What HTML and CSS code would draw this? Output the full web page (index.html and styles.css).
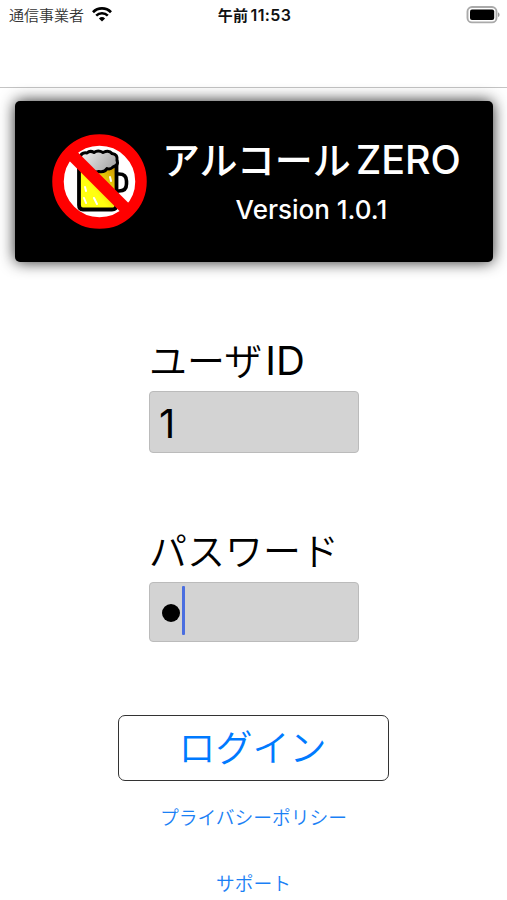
FILE: index.html
```html
<!DOCTYPE html>
<html lang="ja">
<head>
    <meta charset="UTF-8">
    <meta name="viewport" content="width=device-width, initial-scale=1.0">
    <title>アルコールZERO</title>
    <link rel="stylesheet" href="styles.css">
</head>
<body>
    <!-- Status bar -->
    <div class="status-bar">
        <div class="carrier">
            <span>通信事業者</span>
            <svg class="wifi" width="20" height="15" viewBox="0 0 20 15">
                <path d="M1 5.2 A12.6 12.6 0 0 1 19 5.2" fill="none" stroke="#000" stroke-width="2.7"/>
                <path d="M4.2 8.7 A8 8 0 0 1 15.8 8.7" fill="none" stroke="#000" stroke-width="2.5"/>
                <path d="M10 14.6 L6.9 11.5 A4.6 4.6 0 0 1 13.1 11.5 Z"/>
            </svg>
        </div>
        <div class="clock">午前<span>11:53</span></div>
        <svg class="battery" width="34" height="18" viewBox="0 0 34 18">
            <rect x="1.5" y="1" width="29" height="15.4" rx="4.5" fill="#fff" stroke="#aaa" stroke-width="1.9"/>
            <rect x="4" y="3.5" width="24.2" height="10.4" rx="2"/>
            <path d="M32 6.3 Q33.6 7 33.6 8.7 Q33.6 10.4 32 11.1 Z" fill="#999"/>
        </svg>
    </div>

    <div class="nav-bar"></div>

    <!-- Banner -->
    <div class="banner">
        <svg class="logo" width="96" height="96" viewBox="0 0 96 96">
            <defs>
                <linearGradient id="beer" x1="0" y1="1" x2="1" y2="0">
                    <stop offset="0.4" stop-color="#ffff10"/>
                    <stop offset="1" stop-color="#c98a00"/>
                </linearGradient>
                <linearGradient id="foam" x1="0" y1="0" x2="1" y2="0.4">
                    <stop offset="0" stop-color="#f4f4f4"/>
                    <stop offset="1" stop-color="#aaa"/>
                </linearGradient>
            </defs>
            <circle cx="48.5" cy="48.5" r="41" fill="#fff"/>
            <path d="M65 41 H68 Q75.5 41 75.5 48 V51 Q75.5 58 68 58 H65" fill="#fff" stroke="#000" stroke-width="3.6"/>
            <path d="M28 29 V72 Q28 76.5 32 76.5 H61 Q65.5 76.5 65.5 72 V29 Z" fill="url(#beer)" stroke="#000" stroke-width="3.8"/>
            <path d="M34 54 L35 58 M33 65 L35 70 M43 65 L46 71 M59 44 L60 48" stroke="#fff" stroke-width="2" stroke-linecap="round"/>
            <path d="M29 25 Q30 19 36 20 Q39 17 43 19.5 Q47 16.5 52 19.5 Q58 16.5 61 20.5 Q67 21.5 66 27.5 Q68 32 62 34 Q59 37 56 35.5 Q54 39.5 48 38.5 Q43 40 40 36 Q35 36 34 32 Q26 31 29 25 Z" fill="url(#foam)" stroke="#000" stroke-width="3" stroke-linejoin="round"/>
            <path d="M21 22 L74 75" stroke="#f00" stroke-width="12"/>
            <circle cx="48.5" cy="48.5" r="41.5" fill="none" stroke="#f00" stroke-width="11.5"/>
        </svg>
        <div class="banner-text">
            <h1>アルコール<span>ZERO</span></h1>
            <p>Version 1.0.1</p>
        </div>
    </div>

    <!-- Login form -->
    <form class="login">
        <label for="user-id">ユーザ<span>ID</span></label>
        <input type="text" id="user-id" class="field" value="1">

        <div class="label-password">パスワード</div>
        <div class="field field-password">
            <span class="dot"></span>
            <span class="caret"></span>
        </div>

        <button type="button" class="login-button">ログイン</button>
    </form>

    <div class="links">
        <a href="#">プライバシーポリシー</a>
        <a href="#">サポート</a>
    </div>
</body>
</html>
```
FILE: styles.css
```css
* {
    box-sizing: border-box;
}

body {
    margin: 0;
    height: 900px;
    overflow: hidden;
    font-family: Inter, 'Noto Sans CJK JP', sans-serif;
    background-color: white;
    color: black;
}

/* Status bar */
.status-bar {
    display: grid;
    grid-template-columns: 1fr auto 1fr;
    align-items: center;
    height: 30px;
    padding: 0 7px 0 9px;
    font-size: 15px;
    line-height: 30px;
}

.carrier {
    display: flex;
    align-items: center;
    gap: 8px;
    font-weight: 350;
    color: #333;
}

.wifi {
    margin-top: -2px;
}

.clock {
    font-weight: 600;
    letter-spacing: 0.4px;
    color: #111;
}

.clock span {
    margin-left: 2px;
    font-size: 16px;
}

.battery {
    justify-self: end;
    margin-top: -1px;
}

.nav-bar {
    height: 58px;
    border-bottom: 1px solid #c4c4c4;
}

/* Banner */
.banner {
    display: flex;
    height: 161px;
    margin: 13px 14px 0 15px;
    padding-left: 36px;
    background-color: black;
    border-radius: 5px;
    box-shadow: 0 0 15px rgba(0, 0, 0, 0.85);
    color: white;
}

.logo {
    margin-top: 32px;
}

.banner-text {
    margin: 34px 0 0 15px;
    text-align: center;
}

.banner h1 {
    margin: 0;
    font-size: 38px;
    font-weight: 500;
    line-height: 50px;
    white-space: nowrap;
}

.banner h1 span {
    margin-left: 5px;
    font-size: 39.5px;
}

.banner p {
    margin: 8px 0 0;
    font-size: 26px;
    font-weight: 500;
    line-height: 34px;
}

/* Login form */
.login {
    width: 210px;
    margin: 72px 0 0 149px;
    font-size: 38px;
}

.login label,
.label-password {
    display: block;
    height: 57px;
    font-weight: 350;
    line-height: 53px;
    white-space: nowrap;
}

.login label span {
    margin-left: 3px;
    font-size: 40px;
    font-weight: 400;
}

.field {
    display: block;
    width: 210px;
    height: 62px;
    padding: 2px 9px 0;
    font: 400 40px Inter, sans-serif;
    background-color: #d3d3d3;
    border: 1px solid #bbb;
    border-radius: 4px;
    outline: none;
}

.label-password {
    margin-top: 72px;
}

.field-password {
    display: flex;
    align-items: center;
    gap: 2px;
    height: 60px;
    padding: 0 12px;
}

.dot {
    width: 18px;
    height: 18px;
    margin-top: 1px;
    background-color: black;
    border-radius: 50%;
}

.caret {
    width: 3px;
    height: 49px;
    margin-top: -3px;
    background-color: #4a6ee0;
    border-radius: 1px;
}

.login-button {
    display: block;
    width: 271px;
    height: 66px;
    margin: 73px 0 0 -31px;
    padding: 0 2px 5px 0;
    font: 350 37px 'Noto Sans CJK JP', sans-serif;
    color: #007aff;
    background-color: white;
    border: 1.5px solid #333;
    border-radius: 7px;
}

/* Links */
.links {
    display: flex;
    flex-direction: column;
    align-items: center;
    gap: 36px;
    margin-top: 23px;
    font-size: 18.75px;
    line-height: 30px;
}

.links a {
    color: #1a80f5;
    font-weight: 350;
    text-decoration: none;
}
```
